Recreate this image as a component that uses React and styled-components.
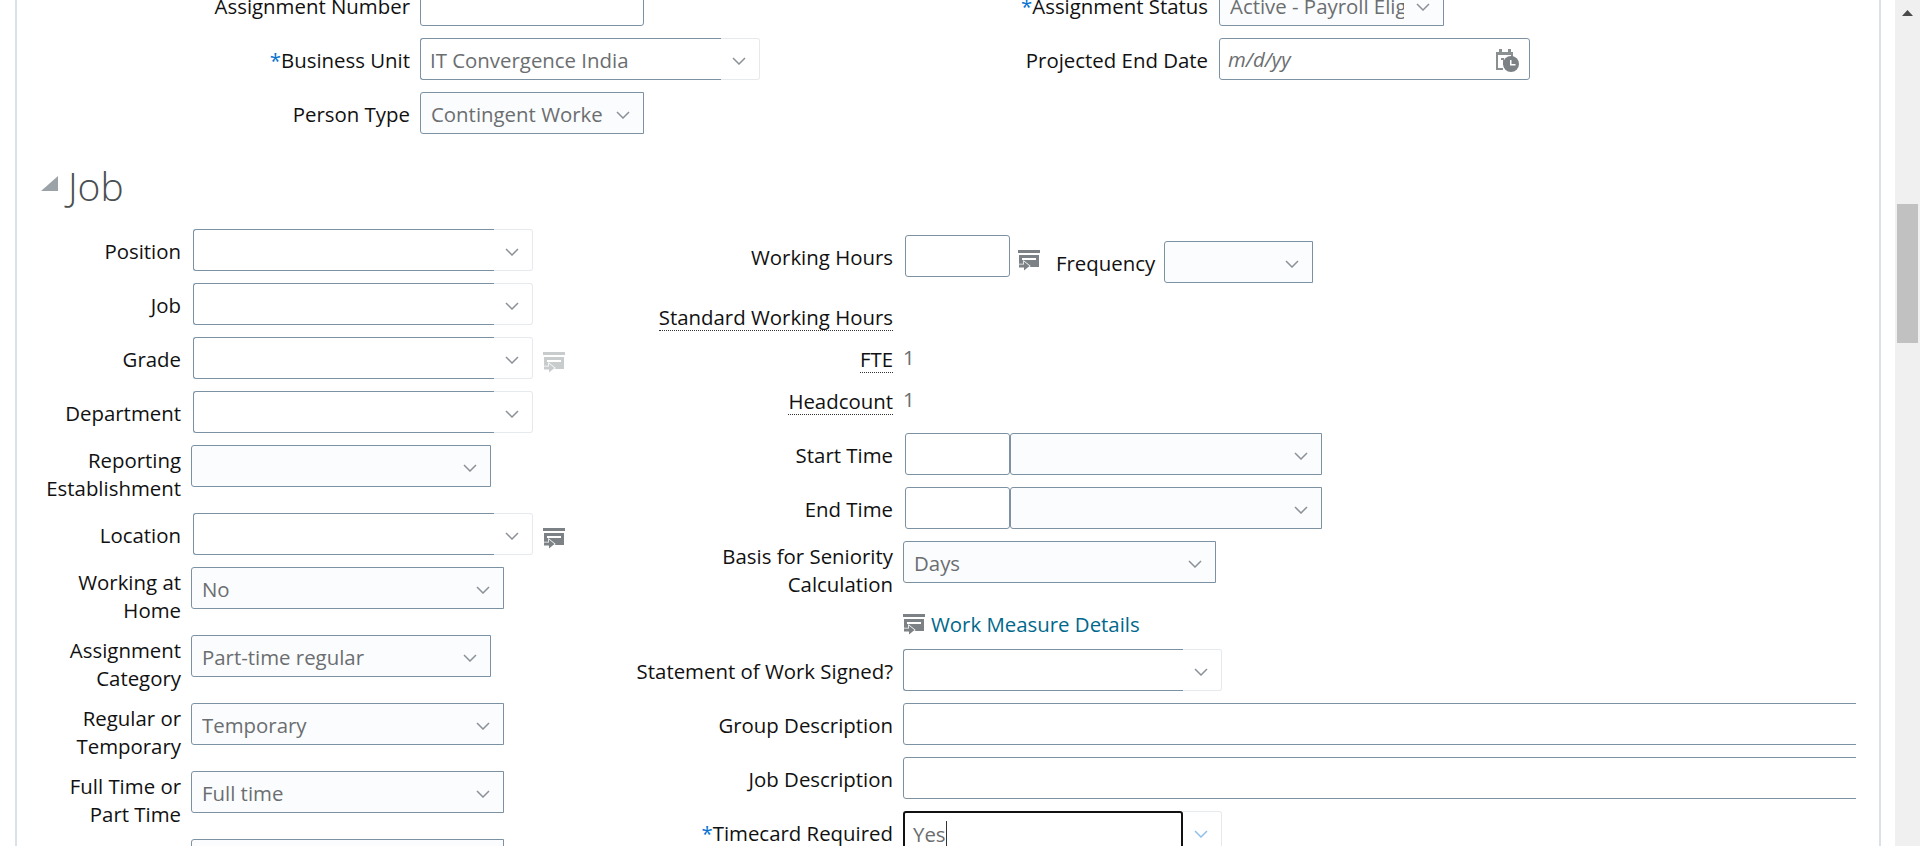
import styled, { createGlobalStyle } from "styled-components";

const GlobalStyle = createGlobalStyle`
  html, body {
    margin: 0;
    padding: 0;
    overflow: hidden;
    background: #fff;
  }
  * { box-sizing: border-box; }
`;

const Chevron = ({ color = "#8b9196" }) => (
  <ChevronSvg viewBox="0 0 14 8">
    <polyline points="1,1 7,7 13,1" fill="none" stroke={color} strokeWidth="1.5" />
  </ChevronSvg>
);

const WorkIcon = ({ faded }) => (
  <WorkSvg viewBox="0 0 22 21" $faded={faded}>
    <rect x="0" y="0" width="22" height="3" fill="#7b8184" />
    <path fillRule="evenodd" d="M1 5h20v12H1zM4 8v2h14V8z" fill="#7b8184" />
    <path d="M1 14.500h5v-3l5.500 4.500L6 20.500v-3H1z" fill="#7b8184" stroke="#fff" strokeWidth="1.500" paintOrder="stroke" />
  </WorkSvg>
);

const CalendarIcon = () => (
  <CalendarSvg viewBox="0 0 24 23">
    <path d="M4 0h3v3h6V0h3v3h2v6h-2V6H3v13h5v2H1V3h3z" fill="#8a8f92" />
    <path d="M6 9h3v7H8v-5H6z" fill="#8a8f92" />
    <circle cx="16" cy="15" r="8" fill="#7b8184" />
    <path d="M15 11h1.500v4h4v1.500H15z" fill="#fff" />
  </CalendarSvg>
);

const Field = ({ label, required, tall, width, gap, children }) => (
  <Row $tall={tall} $gap={gap}>
    <Label $width={width} $tall={tall}>
      {required && <Star>*</Star>}
      {label}
    </Label>
    {children}
  </Row>
);

const Combo = ({ width, value, nudge, focused }) => (
  <ComboBox $width={width} $nudge={nudge}>
    <ComboInput $focused={focused}>
      {value}
      {focused && <Caret />}
    </ComboInput>
    <ComboButton>
      <Chevron color={focused ? "#8fc1ea" : undefined} />
    </ComboButton>
  </ComboBox>
);

const Select = ({ width, value }) => (
  <SelectBox $width={width}>
    <SelectValue>{value}</SelectValue>
    <Chevron />
  </SelectBox>
);

export default function App() {
  return (
    <Page>
      <GlobalStyle />
      <Panel>
        <HeaderForm>
          <HeaderColumn $width={963}>
            <Field label="Assignment Number" width={393}>
              <TextInput $width={224} />
            </Field>
            <Field label="Business Unit" required width={393}>
              <Combo width={340} value="IT Convergence India" />
            </Field>
            <Field label="Person Type" width={393}>
              <Select width={224} value="Contingent Worker" />
            </Field>
          </HeaderColumn>
          <HeaderColumn>
            <Field label="Assignment Status" required width={228} gap={11}>
              <Select width={225} value="Active - Payroll Eligible" />
            </Field>
            <Field label="Projected End Date" width={228} gap={11}>
              <DateInput>
                <DateHint>m/d/yy</DateHint>
                <CalendarIcon />
              </DateInput>
            </Field>
          </HeaderColumn>
        </HeaderForm>

        <SectionTitle>
          <Disclosure />
          <SectionName>Job</SectionName>
        </SectionTitle>

        <JobBody>
          <JobLeft>
            <Field label="Position" width={164}>
              <Combo width={340} nudge={2} />
            </Field>
            <Field label="Job" width={164}>
              <Combo width={340} nudge={2} />
            </Field>
            <Field label="Grade" width={164}>
              <Combo width={340} nudge={2} />
              <SideIcon>
                <WorkIcon faded />
              </SideIcon>
            </Field>
            <Field label="Department" width={164}>
              <Combo width={340} nudge={2} />
            </Field>
            <Field label={<>Reporting<br />Establishment</>} tall width={164}>
              <Select width={300} />
            </Field>
            <Field label="Location" width={164}>
              <Combo width={340} nudge={2} />
              <SideIcon>
                <WorkIcon />
              </SideIcon>
            </Field>
            <Field label={<>Working at<br />Home</>} tall width={164}>
              <Select width={313} value="No" />
            </Field>
            <Field label={<>Assignment<br />Category</>} tall width={164}>
              <Select width={300} value="Part-time regular" />
            </Field>
            <Field label={<>Regular or<br />Temporary</>} tall width={164}>
              <Select width={313} value="Temporary" />
            </Field>
            <Field label={<>Full Time or<br />Part Time</>} tall width={164}>
              <Select width={313} value="Full time" />
            </Field>
            <Field label="" width={164}>
              <Select width={313} />
            </Field>
          </JobLeft>

          <JobRight>
            <HoursRow>
              <Field label="Working Hours" width={273} gap={12}>
                <TextInput $width={105} />
                <HoursIcon>
                  <WorkIcon />
                </HoursIcon>
                <FrequencyLabel>Frequency</FrequencyLabel>
                <FrequencySelect>
                  <Select width={149} />
                </FrequencySelect>
              </Field>
            </HoursRow>
            <InfoRow>
              <InfoLabel><Dotted>Standard Working Hours</Dotted></InfoLabel>
            </InfoRow>
            <InfoRow>
              <InfoLabel><Dotted>FTE</Dotted></InfoLabel>
              <InfoValue>1</InfoValue>
            </InfoRow>
            <InfoRow $last>
              <InfoLabel><Dotted>Headcount</Dotted></InfoLabel>
              <InfoValue>1</InfoValue>
            </InfoRow>
            <Field label="Start Time" width={273} gap={12}>
              <TimePair>
                <TextInput $width={105} />
                <Select width={312} />
              </TimePair>
            </Field>
            <Field label="End Time" width={273} gap={12}>
              <TimePair>
                <TextInput $width={105} />
                <Select width={312} />
              </TimePair>
            </Field>
            <Field label={<>Basis for Seniority<br />Calculation</>} tall width={273}>
              <Select width={313} value="Days" />
            </Field>
            <LinkRow>
              <WorkIcon />
              <WorkLink>Work Measure Details</WorkLink>
            </LinkRow>
            <Field label="Statement of Work Signed?" width={273}>
              <Combo width={319} />
            </Field>
            <Field label="Group Description" width={273}>
              <TextInput $width={1000} />
            </Field>
            <Field label="Job Description" width={273}>
              <TextInput $width={1000} />
            </Field>
            <Field label="Timecard Required" required width={273}>
              <Combo width={319} value="Yes" focused />
            </Field>
          </JobRight>
        </JobBody>
      </Panel>

      <ScrollTrack>
        <ScrollArrow viewBox="0 0 11 6">
          <polygon points="5.500,0 11,6 0,6" fill="#4a4a4a" />
        </ScrollArrow>
        <ScrollThumb />
      </ScrollTrack>
    </Page>
  );
}

const Page = styled.div`
  display: flex;
  width: 1920px;
  height: 846px;
  overflow: hidden;
  font-family: "Open Sans", "Noto Sans", sans-serif;
  font-size: 20.4px;
  color: #111;
`;

const Panel = styled.div`
  width: 1866px;
  height: 846px;
  margin-left: 15px;
  margin-right: 14px;
  border-left: 2px solid #dbe2e8;
  border-right: 2px solid #dbe2e8;
  overflow: hidden;
`;

const HeaderForm = styled.div`
  display: flex;
  margin-top: -16px;
`;

const HeaderColumn = styled.div`
  width: ${(p) => (p.$width ? `${p.$width}px` : "auto")};
`;

const Row = styled.div`
  display: flex;
  align-items: flex-start;
  gap: ${(p) => p.$gap ?? 10}px;
  height: ${(p) => (p.$tall ? 56 : 42)}px;
  margin-bottom: 12px;
`;

const Label = styled.div`
  flex: none;
  width: ${(p) => p.$width}px;
  padding-top: ${(p) => (p.$tall ? 1 : 8)}px;
  line-height: 28px;
  text-align: right;
  white-space: nowrap;
`;

const Dotted = styled.span`
  display: inline-block;
  line-height: 25px;
  border-bottom: 1px dotted #333;
`;

const Star = styled.span`
  color: #0572ce;
`;

const TextInput = styled.div`
  flex: none;
  width: ${(p) => p.$width}px;
  height: 42px;
  background: #fff;
  border: 1px solid #7c92a3;
  border-radius: 3px;
`;

const TimePair = styled.div`
  display: flex;
`;

const ComboBox = styled.div`
  flex: none;
  display: flex;
  width: ${(p) => p.$width}px;
  height: 42px;
  margin-left: ${(p) => p.$nudge ?? 0}px;
`;

const ComboInput = styled.div`
  flex: 1;
  display: flex;
  padding-left: ${(p) => (p.$focused ? 8 : 9)}px;
  line-height: 42px;
  color: #6b6e70;
  border: ${(p) => (p.$focused ? "2px solid #111" : "1px solid #7c92a3")};
  border-right-width: ${(p) => (p.$focused ? "2px" : "0")};
  border-radius: ${(p) => (p.$focused ? "3px" : "3px 0 0 3px")};
`;

const Caret = styled.span`
  width: 1px;
  height: 28px;
  margin-top: 8px;
  background: #333;
`;

const ComboButton = styled.div`
  flex: none;
  display: flex;
  align-items: center;
  justify-content: flex-end;
  width: 39px;
  padding: 4px 13px 0 0;
  border: 1px solid #e6eaed;
  border-left: 0;
  border-radius: 0 3px 3px 0;
`;

const ChevronSvg = styled.svg`
  flex: none;
  width: 14px;
  height: 8px;
`;

const SelectBox = styled.div`
  flex: none;
  display: flex;
  align-items: center;
  width: ${(p) => p.$width}px;
  height: 42px;
  padding: 4px 13px 0 10px;
  background: #fbfcfe;
  border: 1px solid #7c92a3;
  border-radius: 3px 0 0 3px;
`;

const SelectValue = styled.div`
  flex: 1;
  min-width: 0;
  margin: -2px 12px 0 0;
  overflow: hidden;
  white-space: nowrap;
  color: #6b6e70;
`;

const DateInput = styled.div`
  display: flex;
  align-items: center;
  justify-content: space-between;
  width: 311px;
  height: 42px;
  padding: 2px 10px 0 8px;
  border: 1px solid #7c92a3;
  border-radius: 3px;
`;

const DateHint = styled.span`
  margin-bottom: 2px;
  font-style: italic;
  color: #6b6e70;
`;

const CalendarSvg = styled.svg`
  flex: none;
  width: 24px;
  height: 23px;
`;

const WorkSvg = styled.svg`
  flex: none;
  width: 22px;
  height: 21px;
  opacity: ${(p) => (p.$faded ? 0.4 : 1)};
`;

const SideIcon = styled.div`
  display: flex;
  padding-top: 15px;
`;

const SectionTitle = styled.div`
  display: flex;
  align-items: flex-start;
  height: 83px;
  padding: 15px 0 0 24px;
`;

const Disclosure = styled.div`
  width: 0;
  height: 0;
  margin-top: 15px;
  border-style: solid;
  border-width: 0 0 15px 17px;
  border-color: transparent transparent #9ba3a8 transparent;
`;

const SectionName = styled.h2`
  margin: 0 0 0 10px;
  font-size: 39px;
  font-weight: 300;
  line-height: 50px;
  color: #4a4f52;
`;

const JobBody = styled.div`
  display: flex;
`;

const JobLeft = styled.div`
  flex: none;
  width: 603px;
`;

const JobRight = styled.div`
  flex: none;
  width: 1236px;
  padding-top: 6px;
  overflow: hidden;
`;

const HoursRow = styled.div`
  height: 62px;
`;

const HoursIcon = styled.div`
  display: flex;
  margin-left: -4px;
  padding-top: 15px;
`;

const FrequencyLabel = styled.span`
  flex: none;
  width: 96px;
  margin-left: 4px;
  padding-top: 14px;
  line-height: 28px;
  white-space: nowrap;
`;

const FrequencySelect = styled.div`
  margin-top: 6px;
`;

const InfoRow = styled.div`
  display: flex;
  gap: 10px;
  height: 42px;
  margin-bottom: ${(p) => (p.$last ? 10 : 0)}px;
`;

const InfoLabel = styled.div`
  flex: none;
  width: 273px;
  padding-top: 6px;
  text-align: right;
`;

const InfoValue = styled.div`
  padding-top: 6px;
  line-height: 25px;
  color: #6b6e70;
`;

const LinkRow = styled.div`
  display: flex;
  align-items: center;
  gap: 6px;
  height: 30px;
  margin: 0 0 10px 283px;
`;

const WorkLink = styled.a`
  color: #00688c;
`;

const ScrollTrack = styled.div`
  flex: none;
  display: flex;
  flex-direction: column;
  align-items: center;
  width: 25px;
  height: 846px;
  padding-top: 10px;
  background: #f0f0f0;
`;

const ScrollArrow = styled.svg`
  flex: none;
  width: 11px;
  height: 6px;
`;

const ScrollThumb = styled.div`
  flex: none;
  width: 21px;
  height: 139px;
  margin-top: 188px;
  background: #c1c1c1;
`;
